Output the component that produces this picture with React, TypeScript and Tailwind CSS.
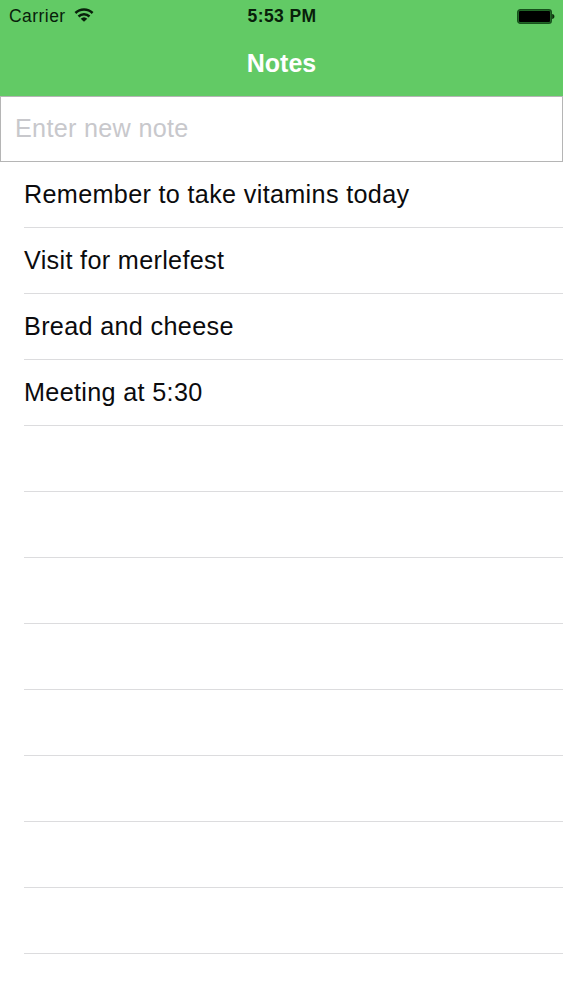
const notes = [
  'Remember to take vitamins today',
  'Visit for merlefest',
  'Bread and cheese',
  'Meeting at 5:30',
];

const EMPTY_ROWS = 8;

function WifiIcon({ className }: { className?: string }) {
  return (
    <svg viewBox="0 0 20 14" fill="none" stroke="currentColor" strokeWidth="2.5" className={className}>
      <path d="M1.4 5a12.4 12.4 0 0 1 17.2 0" />
      <path d="M4.5 8.5a8 8 0 0 1 11 0" />
      <path d="M10 13.8 6.7 10.7a4.8 4.8 0 0 1 6.6 0z" fill="currentColor" stroke="none" />
    </svg>
  );
}

function BatteryIcon({ className }: { className?: string }) {
  return (
    <svg viewBox="0 0 38 15" className={className}>
      <rect x="0.7" y="0.7" width="33.6" height="13.6" rx="2.6" fill="#2b7a31" stroke="#17501c" strokeWidth="1.4" />
      <rect x="2" y="2" width="31" height="11" rx="1" fill="#000" />
      <path d="M35.2 5c1.4.3 2.2 1.2 2.2 2.5s-.8 2.2-2.2 2.5z" fill="#0a2a0c" />
    </svg>
  );
}

function StatusBar() {
  return (
    <div className="grid h-8 grid-cols-3 items-center pl-[9px] pr-2 text-[#08200a]">
      <div className="flex items-center gap-2">
        <span className="text-[17.5px] leading-8 tracking-[0.45px]">Carrier</span>
        <WifiIcon className="-mt-[2px] h-[14px] w-5" />
      </div>
      <span className="text-center text-[17.5px] font-bold leading-8 tracking-[0.4px]">5:53 PM</span>
      <BatteryIcon className="h-[15px] w-[38px] justify-self-end" />
    </div>
  );
}

export default function App() {
  return (
    <div className="h-[1000px] w-full overflow-hidden bg-white font-['Liberation_Sans',Arial,sans-serif] text-[#0b0b0d]">
      <header className="h-24 bg-[#62ca65]">
        <StatusBar />
        <h1 className="text-center text-[25px] font-bold leading-[62px] text-white">Notes</h1>
      </header>

      <input
        type="text"
        placeholder="Enter new note"
        className="block h-[66px] w-full border border-[#b5b5b5] bg-white px-[14px] pb-[2px] text-[25.2px] tracking-[0.3px] outline-none placeholder:text-[#c8c8cc]"
      />

      <ul className="pl-6">
        {notes.map((note) => (
          <li
            key={note}
            className="h-[66px] border-b border-[#dcdcde] text-[25.2px] leading-[64px] tracking-[0.33px]"
          >
            {note}
          </li>
        ))}
        {Array.from({ length: EMPTY_ROWS }, (_, index) => (
          <li key={index} className="h-[66px] border-b border-[#dcdcde]" />
        ))}
      </ul>
    </div>
  );
}
